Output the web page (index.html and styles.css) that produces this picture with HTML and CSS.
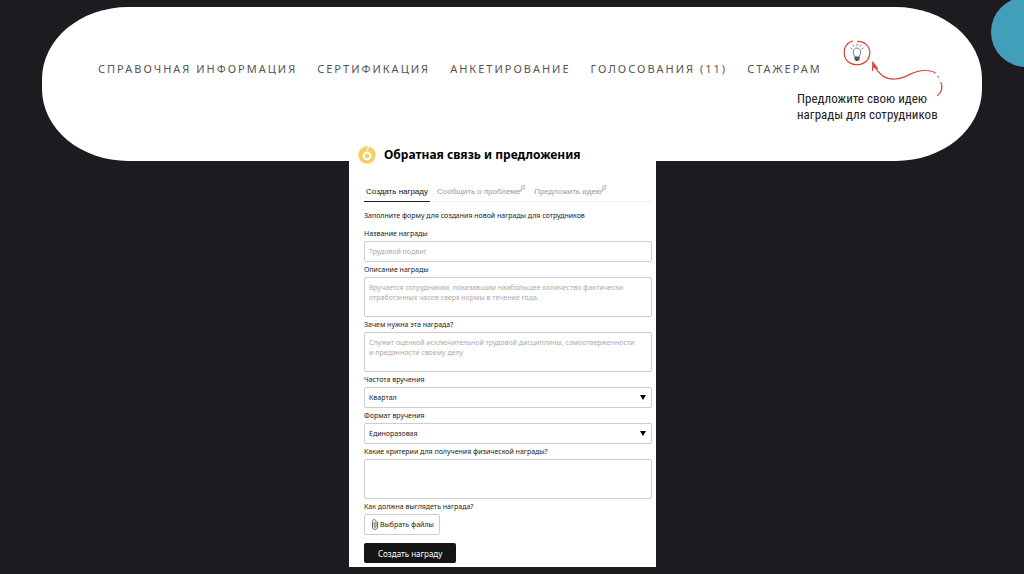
FILE: index.html
```
<!DOCTYPE html>
<html lang="ru">
<head>
    <meta charset="UTF-8">
    <meta name="viewport" content="width=device-width, initial-scale=1.0">
    <title>Обратная связь и предложения</title>
    <link rel="stylesheet" href="styles.css">
</head>
<body>

<div class="accent-circle"></div>

<header class="banner">
    <nav class="main-nav">
        <a href="#">Справочная информация</a>
        <a href="#">Сертификация</a>
        <a href="#">Анкетирование</a>
        <a href="#">Голосования (11)</a>
        <a href="#">Стажерам</a>
    </nav>

    <!-- Callout over the right end of the banner -->
    <div class="idea">
        <svg class="idea-drawing" viewBox="0 0 150 62" width="150" height="62" fill="none" aria-hidden="true">
            <g stroke="#d2432f" stroke-width="1.2" stroke-linecap="round">
                <path d="M55.500 4C50 6 47 10.500 47.200 16C47.500 23 52.500 27.700 60 27.700C67 27.700 72.500 23 72.800 16C73 9 67 4 60.500 4.300"/>
                <path d="M76 26C81 37 89 43 99 42C112 40.500 115 33 129 33.500C133 33.500 136 34 138 36"/>
                <path d="M75.500 33.500L76 25.500L80.500 31.500M76 26L77.500 31"/>
                <path d="M141 39.500L141.300 40"/>
                <path d="M144 45.500C146 50 144.500 55.500 140.500 58.500"/>
            </g>
            <g stroke="#777b80" stroke-width="1" stroke-linecap="round">
                <path d="M58 20.500C58 18.500 56.200 17.500 56.200 15C56.200 12.500 58 11 60 11C62 11 63.800 12.500 63.800 15C63.800 17.500 62 18.500 62 20.500"/>
                <path d="M60 7V8.500M56 8L56.800 9.300M64 8L63.200 9.300M53.800 11L55 11.700M66.200 11L65 11.700"/>
            </g>
            <path d="M57.500 19.500H62.500V22.500L61 24H59L57.500 22.500Z" fill="#50555a"/>
        </svg>
        <p class="idea-text">Предложите свою идею<br>награды для сотрудников</p>
    </div>
</header>

<main class="panel">
    <div class="panel-title">
        <svg class="logo" viewBox="0 0 18 18" width="18" height="18" fill="none" aria-hidden="true">
            <circle cx="9" cy="9" r="8.700" fill="#f4cf63"/>
            <circle cx="9" cy="9.800" r="3.400" stroke="#fff" stroke-width="2"/>
            <path d="M9 4.500L10.600 1" stroke="#fff" stroke-width="1.400"/>
        </svg>
        <h1>Обратная связь и предложения</h1>
    </div>

    <div class="tabs" role="tablist">
        <button type="button" class="tab active" role="tab" aria-selected="true">Создать награду</button>
        <button type="button" class="tab" role="tab" aria-selected="false">Сообщить о проблеме<sup>β</sup></button>
        <button type="button" class="tab" role="tab" aria-selected="false">Предложить идею<sup>β</sup></button>
    </div>

    <form class="award-form">
        <p class="intro">Заполните форму для создания новой награды для сотрудников</p>

        <label for="awardName">Название награды</label>
        <input type="text" id="awardName" name="awardName" placeholder="Трудовой подвиг">

        <label for="awardText">Описание награды</label>
        <textarea id="awardText" name="awardText" placeholder="Вручается сотрудникам, показавшим наибольшее количество фактически отработанных часов сверх нормы в течение года."></textarea>

        <label for="awardReason">Зачем нужна эта награда?</label>
        <textarea id="awardReason" name="awardReason" placeholder="Служит оценкой исключительной трудовой дисциплины, самоотверженности и преданности своему делу"></textarea>

        <label for="frequency">Частота вручения</label>
        <div class="select-box">
            <select id="frequency" name="frequency">
                <option>Квартал</option>
            </select>
        </div>

        <label for="format">Формат вручения</label>
        <div class="select-box">
            <select id="format" name="format">
                <option>Единоразовая</option>
            </select>
        </div>

        <label for="criteria">Какие критерии для получения физической награды?</label>
        <textarea id="criteria" name="criteria"></textarea>

        <p class="field-title">Как должна выглядеть награда?</p>
        <input type="file" class="file-input" id="files" name="files" multiple>
        <label class="file-btn" for="files">
            <svg viewBox="0 0 6 11" width="6" height="11" fill="none" stroke="#444" stroke-width="0.800" stroke-linecap="round" aria-hidden="true">
                <path d="M5.500 3V8C5.500 11.200 0.500 11.200 0.500 8V2.500C0.500 0 4 0 4 2.500V7.500C4 8.800 2.200 8.800 2.200 7.500V3.500"/>
            </svg>
            Выбрать файлы
        </label>

        <button type="submit" class="submit-btn">Создать награду</button>
    </form>
</main>

</body>
</html>
```
FILE: styles.css
```
* {
    box-sizing: border-box;
}

body {
    margin: 0;
    padding-top: 7px;
    position: relative;
    min-height: 100vh;
    overflow: hidden;
    background-color: #1d1b1f;
    color: #222;
    font-family: "Noto Sans", "Open Sans", sans-serif;
}

.accent-circle {
    position: absolute;
    top: -3px;
    right: -37px;
    width: 70px;
    height: 70px;
    border-radius: 50%;
    background-color: #429fba;
}

/* Banner */
.banner {
    position: relative;
    margin: 0 42px;
    padding: 52px 56px 82px;
    background-color: #fff;
    border-radius: 86px / 72px;
}

.main-nav {
    display: flex;
    gap: 20px;
    line-height: 20px;
}

.main-nav a {
    color: #555;
    font-size: 11px;
    letter-spacing: 2px;
    text-decoration: none;
    text-transform: uppercase;
    white-space: nowrap;
}

.idea {
    position: absolute;
    top: 30px;
    right: 35px;
}

.idea-drawing {
    display: block;
}

.idea-text {
    margin: -8px 0 0;
    color: #222;
    font-family: "Roboto Condensed", Roboto, sans-serif;
    font-size: 13px;
    line-height: 16px;
}

/* Feedback panel */
.panel {
    position: relative;
    width: 307px;
    margin: -16px 0 7px calc(50% - 163px);
    padding: 0 4px 4px 15px;
    background-color: #fff;
}

.panel-title {
    display: flex;
    align-items: center;
    gap: 8px;
    margin-left: -6px;
}

.panel-title h1 {
    margin: 0;
    color: #000;
    font-size: 12px;
    line-height: 20px;
}

.tabs {
    display: flex;
    gap: 5px;
    margin-top: 16px;
    border-bottom: 1px solid #eee;
}

.tab {
    height: 21px;
    margin-bottom: -1px;
    padding: 0 2px;
    border: none;
    border-bottom: 1px solid transparent;
    background: none;
    color: #999;
    font-family: "Liberation Sans", Arial, sans-serif;
    font-size: 8px;
    white-space: nowrap;
}

.tab.active {
    border-bottom-color: #222;
    color: #111;
}

.tab sup {
    font-size: 8px;
    font-style: italic;
    line-height: 0;
}

.award-form {
    display: flex;
    flex-direction: column;
    align-items: stretch;
    font-size: 7px;
    line-height: 15px;
}

.intro {
    margin: 6px 0 3px;
}

.field-title {
    margin: 0;
}

.award-form input[type="text"],
.award-form textarea,
.award-form select {
    display: block;
    width: 100%;
    margin: 0;
    padding: 5px 12px 5px 4px;
    border: 1px solid #ccc;
    border-radius: 2px;
    background-color: #fff;
    color: #222;
    font-family: inherit;
    font-size: 7px;
    line-height: 10px;
}

.award-form input[type="text"],
.award-form select {
    height: 21px;
}

.award-form textarea {
    height: 40px;
    resize: none;
}

.award-form ::placeholder {
    color: #aaa;
}

.select-box {
    position: relative;
}

.award-form select {
    appearance: none;
    padding: 0 4px;
}

.select-box::after {
    content: "";
    position: absolute;
    top: 8px;
    right: 6px;
    border: 3px solid transparent;
    border-top: 5px solid #000;
    border-bottom: none;
    pointer-events: none;
}

.file-input {
    position: absolute;
    width: 1px;
    height: 1px;
    opacity: 0;
}

.file-btn {
    display: flex;
    align-items: center;
    align-self: flex-start;
    gap: 2px;
    height: 21px;
    padding: 0 5px 0 7px;
    border: 1px solid #ccc;
    border-radius: 2px;
    cursor: pointer;
}

.submit-btn {
    align-self: flex-start;
    height: 20px;
    margin-top: 8px;
    padding: 0 14px;
    border: none;
    border-radius: 2px;
    background-color: #151515;
    color: #fff;
    font-family: inherit;
    font-size: 8px;
    cursor: pointer;
}
```
